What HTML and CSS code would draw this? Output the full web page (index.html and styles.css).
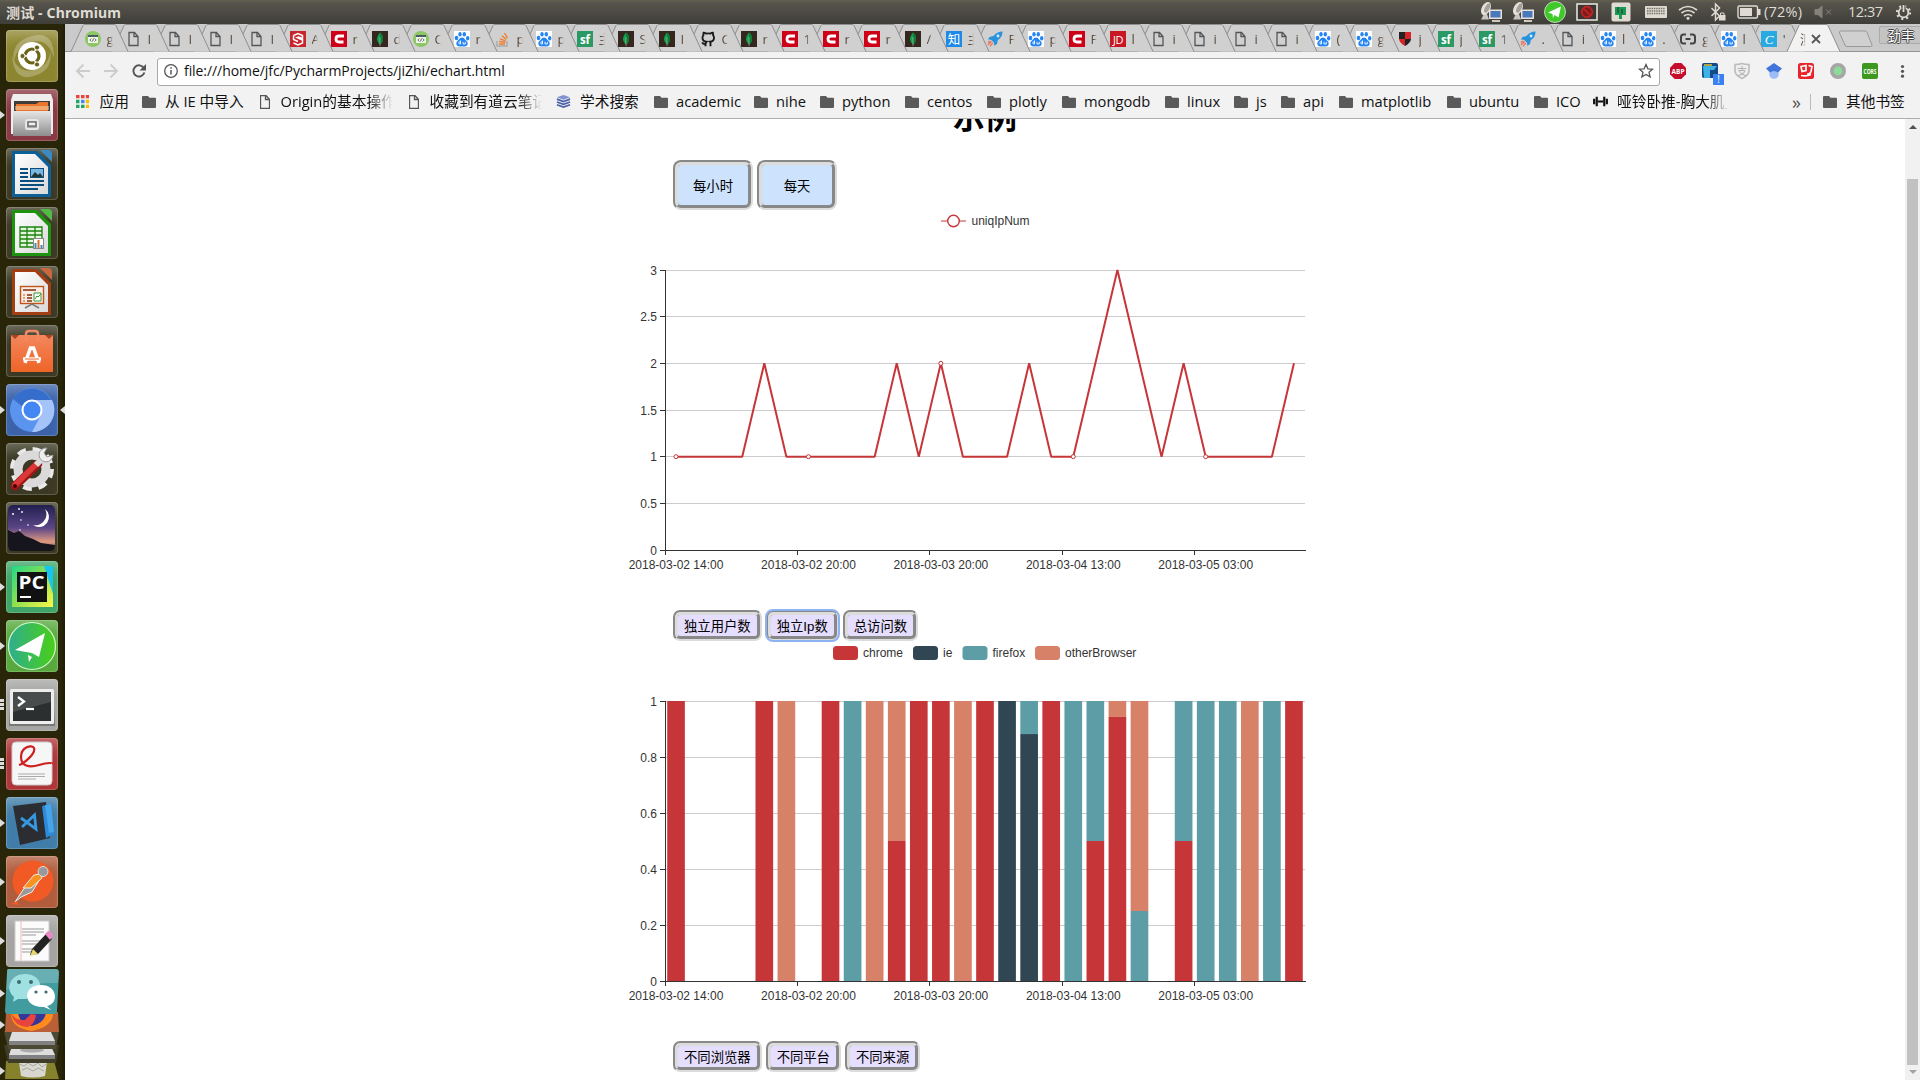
FILE: index.html
```html
<!DOCTYPE html>
<html lang="zh-CN">
<head>
<meta charset="utf-8">
<title>测试</title>
<link rel="stylesheet" href="styles.css">
</head>
<body>
<svg class="defs" width="0" height="0">
  <defs>
    <linearGradient id="paper" x1="0" y1="0" x2="1" y2="1"><stop offset="0" stop-color="#fff"/><stop offset="1" stop-color="#d9d9d9"/></linearGradient>
    <linearGradient id="steel" x1="0" y1="0" x2="0" y2="1"><stop offset="0" stop-color="#e6e6e6"/><stop offset="1" stop-color="#8d8d8d"/></linearGradient>
    <linearGradient id="night" x1="0" y1="0" x2="0" y2="1"><stop offset="0" stop-color="#22204f"/><stop offset=".5" stop-color="#5b4687"/><stop offset=".8" stop-color="#e09a80"/><stop offset="1" stop-color="#6b4a55"/></linearGradient>
    <linearGradient id="bag" x1="0" y1="0" x2="0" y2="1"><stop offset="0" stop-color="#f4875c"/><stop offset="1" stop-color="#ee6427"/></linearGradient>
    <linearGradient id="leafy" x1="0" y1="0" x2="1" y2="0"><stop offset="0" stop-color="#2fae8e"/><stop offset="1" stop-color="#49cf15"/></linearGradient>
    <linearGradient id="pc" x1="0" y1="0" x2="1" y2="1"><stop offset="0" stop-color="#21d789"/><stop offset=".5" stop-color="#8fe04f"/><stop offset="1" stop-color="#fcf84a"/></linearGradient>
  </defs>
  <symbol id="code" viewBox="0 0 16 16"><circle cx="8" cy="8" r="8" fill="#8cc665"/><rect x="3" y="4" width="10" height="8" fill="#eef6e8"/><rect x="3" y="4" width="10" height="2" fill="#4b5b66"/><path d="M6.3 7.5L4.8 9l1.5 1.5M9.7 7.5L11.200 9l-1.500 1.500M8.500 7.500l-1 3" fill="none" stroke="#555" stroke-width=".9"/></symbol>
  <symbol id="doc" viewBox="0 0 16 16"><path d="M3 1.500h5.500l3.500 4v9H3zM8 1.500v4h4" fill="none" stroke="#555" stroke-width="1.300"/></symbol>
  <symbol id="s3" viewBox="0 0 16 16"><rect width="16" height="16" fill="#c9252d"/><path d="M3.500 4.500L8 2.500l4.500 2v3L8.500 6 7 6.500l5.500 2.500v3L8 14l-4.500-2" fill="none" stroke="#fff" stroke-width="1.500"/><path d="M3.500 4.500v4L8 10.500" fill="none" stroke="#fff" stroke-width="1.500"/></symbol>
  <symbol id="csdn" viewBox="0 0 16 16"><rect width="16" height="16" fill="#ce0018"/><path d="M13 5H8Q5 5 5 8t3 3h4.500" fill="none" stroke="#fff" stroke-width="2.800"/></symbol>
  <symbol id="mongo" viewBox="0 0 16 16"><rect width="16" height="16" fill="#35261e"/><path d="M8 1.500Q11.500 4.500 11 8.500T8 13.500Q5.200 11.500 5 8.500T8 1.500z" fill="#12a04c"/><path d="M8 1.500Q11.500 4.500 11 8.500T8 13.500z" fill="#0c7b36"/><path d="M8 6v9" stroke="#c2bfbf" stroke-width=".6"/></symbol>
  <symbol id="baidu" viewBox="0 0 16 16"><rect width="16" height="16" fill="#fff"/><g fill="#2585f5"><ellipse cx="2.500" cy="7" rx="1.800" ry="2.200"/><ellipse cx="6" cy="3.300" rx="1.700" ry="2.300"/><ellipse cx="10.300" cy="3.300" rx="1.700" ry="2.300"/><ellipse cx="13.700" cy="7.300" rx="1.700" ry="2.200"/><path d="M8 6.500q2 0 3.300 2.300l2 2q1 2-.2 3.600-1.500 1.400-5.100.8-3.600.6-5.100-.8-1.200-1.600-.2-3.600l2-2Q6 6.500 8 6.500z"/></g><path d="M6.500 9.500V13H5.300q-1-1.500 0-2.200h1.200M9 10.800V13h2.300v-2.200" stroke="#fff" fill="none" stroke-width=".9"/></symbol>
  <symbol id="stack" viewBox="0 0 16 16"><path d="M2 10v5h10v-5" fill="none" stroke="#aaa" stroke-width="1.400"/><path d="M4 13h6M4.200 10.500l6 .8M5 7.800l5.600 2M6.800 4.800l4.600 3.600M9.500 2l3 5" stroke="#f08030" stroke-width="1.400"/></symbol>
  <symbol id="sf" viewBox="0 0 16 16"><rect width="16" height="16" fill="#2a9964"/><text x="8" y="12.500" text-anchor="middle" class="sfm">sf</text></symbol>
  <symbol id="github" viewBox="0 0 16 16"><path d="M5.500 15.300v-2.500Q3 13.300 2.200 11.300M10.500 15.300v-3q0-1-.5-1.500 4-.4 4-4 0-1.600-1-2.800.3-1.300-.1-2.400-1.200 0-2.400 1-2-.5-4.500 0-1.200-1-2.400-1-.4 1.100-.1 2.400-1 1.200-1 2.800 0 3.600 4 4-.6.600-.5 1.700" fill="none" stroke="#1b1b1b" stroke-width="1.900"/></symbol>
  <symbol id="zhihu" viewBox="0 0 16 16"><rect width="16" height="16" fill="#1d8ae8"/><text x="8" y="12.700" text-anchor="middle" class="zh">知</text></symbol>
  <symbol id="rocket" viewBox="0 0 16 16"><path d="M15.500.5Q10 .5 6.500 5L2.500 6 1 8.500l3 .3 3 3 .3 3L10 13l.8-3.800Q15.700 6 15.500.500z" fill="#2893dc"/><circle cx="11" cy="5" r="1.400" fill="#d7ecfa"/><path d="M4.500 10.500L1 14M5.800 11.800L3 15.500M3.200 10L.8 11.500" stroke="#f06c4e" stroke-width="1.200"/></symbol>
  <symbol id="jd" viewBox="0 0 16 16"><rect width="16" height="16" fill="#c81623"/><text x="8" y="12.500" text-anchor="middle" class="jdm">JD</text></symbol>
  <symbol id="shield" viewBox="0 0 16 16"><path d="M2 1h6v7H2zM8 8h6q-.5 4-6 7z" fill="#222"/><path d="M8 1h6v7H8zM2 8h6v7Q2.500 12 2 8z" fill="#d8232a"/></symbol>
  <symbol id="ali" viewBox="0 0 16 16"><path d="M6 3.500H3.500Q1 3.500 1 6v4q0 2.500 2.500 2.500H6M10 3.500h2.500Q15 3.500 15 6v4q0 2.500-2.500 2.500H10M5.500 8h5" fill="none" stroke="#444" stroke-width="2"/></symbol>
  <symbol id="cy" viewBox="0 0 16 16"><rect width="16" height="16" fill="#27aae1"/><text x="8" y="13" text-anchor="middle" class="cym">C</text></symbol>
  <symbol id="folder" viewBox="0 0 14 12"><path d="M1 0h5l1.500 1.800H13q1 0 1 1V11q0 1-1 1H1q-1 0-1-1V1q0-1 1-1z" fill="#5a5a5a"/></symbol>
  <symbol id="net" viewBox="0 0 22 22"><path d="M4 13l-3 5.500h8L7 13z" fill="#c9c5bc"/><ellipse cx="6" cy="7.500" rx="4.300" ry="7" transform="rotate(28 6 7.500)" fill="#e4e0d8"/><ellipse cx="7.300" cy="7" rx="2.300" ry="5" transform="rotate(28 7.300 7)" fill="#a5a198"/><rect x="9" y="8.500" width="13" height="9.500" fill="#e6e2da"/><rect x="10.500" y="10" width="10" height="6.500" fill="#4a78be"/><path d="M12 20h8" stroke="#dfdbd2" stroke-width="1.800"/></symbol>
</svg>

<header class="panel">
  <span class="title">测试 - Chromium</span>
  <svg class="tray" width="440" height="24" viewBox="1480 0 440 24">
    <use href="#net" x="1480" y="1" width="22" height="22"/><use href="#net" x="1512" y="1" width="22" height="22"/>
    <circle cx="1555" cy="12" r="10.500" fill="#41c92c" stroke="#d9f0cf" stroke-width=".8"/><path d="M1548 12.500l13-6-2.500 11-4-2.500-1.500 3-.500-4z" fill="#fff"/>
    <rect x="1577" y="4" width="20" height="16" fill="#3c3535" stroke="#e4e0d8" stroke-width="1.600"/><circle cx="1587" cy="12" r="5.300" fill="#7c1c1c" stroke="#c22" stroke-width="1.700"/><path d="M1583.500 8.500l7 7" stroke="#c22" stroke-width="1.700"/>
    <rect x="1611.500" y="2.500" width="19" height="19" rx="2" fill="#dfdbd2"/><path d="M1615 7h11v8h-4v4h-3v-4h-4z" fill="#189a52"/><path d="M1618 7v6M1622 9v5" stroke="#333"/>
    <rect x="1645" y="6" width="22" height="12" rx="1" fill="#dedad2"/><path d="M1647 8.500h18M1647 11h18M1647 13.500h18" stroke="#77746c" stroke-width="1.300" stroke-dasharray="1.500 .8"/>
    <path d="M1679 10q9-7 18 0M1681.500 13q6.500-5 13 0M1684 16q4-3 8 0" fill="none" stroke="#dfdbd2" stroke-width="1.700"/><circle cx="1688" cy="18.200" r="1.500" fill="#dfdbd2"/>
    <path d="M1711.500 8l8 8-4 4V4l4 4-8 8" fill="none" stroke="#dfdbd2" stroke-width="1.500"/><rect x="1719" y="15" width="6.500" height="5.500" fill="#dfdbd2"/><path d="M1720.500 15v-2h3.500v2" fill="none" stroke="#dfdbd2"/>
    <rect x="1738" y="6" width="19.500" height="12" rx="1.500" fill="none" stroke="#dfdbd2" stroke-width="1.400"/><rect x="1740" y="8" width="12" height="8" fill="#dfdbd2"/><rect x="1758" y="9" width="2.500" height="6" fill="#dfdbd2"/>
    <text x="1764" y="17" textLength="38" class="ptext">(72%)</text>
    <path d="M1815 9.500h3l4-3.500v12l-4-3.500h-3zM1826 9.500l5 5M1831 9.500l-5 5" fill="#85827a" stroke="#85827a" stroke-width="1"/>
    <text x="1848" y="17" textLength="35" class="ptext">12:37</text>
    <circle cx="1903.500" cy="12.500" r="4.800" fill="none" stroke="#dfdbd2" stroke-width="1.800"/><circle cx="1903.500" cy="12.500" r="6.500" fill="none" stroke="#dfdbd2" stroke-width="2.200" stroke-dasharray="2 3.100"/><path d="M1903.500 4v8" stroke="#4c4a43" stroke-width="4"/><path d="M1903.500 5v7" stroke="#dfdbd2" stroke-width="1.800"/>
  </svg>
</header>

<div class="desk">
<nav class="launcher">
  <div class="tile t-ubuntu"><svg viewBox="0 0 52 52"><path d="M8 32Q4 12 26 6t22 22Q42 8 26 12T8 32zM44 20q4 20-16 26T6 26q6 18 22 14t16-20z" fill="#fff" opacity=".25"/><circle cx="26" cy="26" r="14" fill="#fff"/><circle cx="26" cy="26" r="7" fill="none" stroke="#6b6418" stroke-width="3.200"/><path d="M26 26L16 26M26 26l5-9M26 26l5 9" stroke="#fff" stroke-width="1.500"/><g fill="#6b6418" stroke="#fff" stroke-width="1"><circle cx="16.500" cy="26" r="2.600"/><circle cx="31" cy="17.500" r="2.600"/><circle cx="31" cy="34.500" r="2.600"/></g></svg></div>
  <div class="tile t-files run"><svg viewBox="0 0 52 52"><path d="M7 5h38l2 6v34H5V11z" fill="#eee"/><rect x="8" y="12" width="36" height="16" fill="#403c3a"/><path d="M10 15h20l3-2h9v12H10z" fill="#e8762c"/><path d="M9 18h34M9 20h34" stroke="#fbd9b0"/><path d="M7 22h38v25H7z" fill="url(#steel)"/><rect x="20" y="31" width="12" height="9" rx="1.500" fill="none" stroke="#e5e5e5" stroke-width="2"/><rect x="22" y="33" width="8" height="4" fill="#eee" stroke="#444"/></svg></div>
  <div class="tile t-dark"><svg viewBox="0 0 52 52"><path d="M6 3h25l14 14v32H6z" fill="#0c5f97"/><path d="M34 2h8q4 0 4 4v8z" fill="#3b8ac2"/><path d="M9 6h20l13 13v27H9z" fill="url(#paper)"/><path d="M14 21h8M14 25h8M14 29h8M14 33h24M14 37h24M14 41h18" stroke="#0a4e7e" stroke-width="2"/><rect x="24.500" y="20.500" width="13" height="9" fill="#79b7df" stroke="#0a4e7e"/><path d="M25 29l4-5 3 3 2-2 3 4z" fill="#233"/></svg></div>
  <div class="tile t-dark"><svg viewBox="0 0 52 52"><path d="M6 3h25l14 14v32H6z" fill="#1d9310"/><path d="M34 2h8q4 0 4 4v8z" fill="#52bb44"/><path d="M9 6h20l13 13v27H9z" fill="url(#paper)"/><path d="M14 20h22v20H14zM14 24h22M14 28h22M14 32h22M14 36h22M21 20v20M29 20v20" fill="#e3f7dc" stroke="#1e8212" stroke-width="1.300"/><rect x="27.500" y="31.500" width="10" height="10" fill="#fff" stroke="#888"/><path d="M29.500 36v5M35.500 38v3" stroke="#3a8ac8" stroke-width="2"/><path d="M32.500 33v8" stroke="#e06a1c" stroke-width="2"/></svg></div>
  <div class="tile t-dark"><svg viewBox="0 0 52 52"><path d="M6 3h25l14 14v32H6z" fill="#a13e13"/><path d="M34 2h8q4 0 4 4v8z" fill="#c9683d"/><path d="M9 6h20l13 13v27H9z" fill="url(#paper)"/><rect x="14.500" y="20.500" width="23" height="17" fill="#f7ede6" stroke="#c2541b" stroke-width="1.400"/><path d="M17 24h13M21 29h5M21 32h5M21 35h5" stroke="#83310c" stroke-width="1.700"/><path d="M17 29h2M17 32h2M17 35h2" stroke="#e28a50" stroke-width="1.700"/><path d="M28 27h7v8h-7zM29 33l2-3 1 1 3-3" fill="#fff" stroke="#3b9a35"/><path d="M19 42l7-4 7 4" fill="none" stroke="#777" stroke-width="1.500"/></svg></div>
  <div class="tile t-dark"><svg viewBox="0 0 52 52"><path d="M5 10h42v37H5z" fill="url(#bag)"/><path d="M5 10l4 4 4-4M39 10l4 4 4-4" fill="#a84322"/><path d="M20 16V9q0-3 3-3h6q3 0 3 3v7" fill="none" stroke="#f08a66" stroke-width="2.500"/><path d="M19 38l5.500-15h3L33 38" stroke="#fff" stroke-width="3.500" fill="none"/><path d="M17 34h18" stroke="#fff" stroke-width="3.500"/><path d="M19 34h14" stroke="#ee6427" stroke-width="1"/></svg></div>
  <div class="tile t-chromium run focus"><svg viewBox="0 0 52 52"><circle cx="26" cy="26" r="22" fill="#5b94ef"/><path d="M26 16h20a22 22 0 0 1-20 32l9-17z" fill="#a4c3f8"/><path d="M7 15a22 22 0 0 1 38 1H26q-7 1-9 7z" fill="#366fcb"/><circle cx="26" cy="26" r="9.500" fill="#4387f4" stroke="#fff" stroke-width="2"/></svg></div>
  <div class="tile t-dark"><svg viewBox="0 0 52 52"><circle cx="26" cy="26" r="18" fill="none" stroke="#e9e9e9" stroke-width="8" stroke-dasharray="8 6.140"/><circle cx="26" cy="26" r="14" fill="none" stroke="#dadada" stroke-width="9"/><path d="M9 43L32 21" stroke="#9d1616" stroke-width="8.500" stroke-linecap="round"/><path d="M9 42L31 20.500" stroke="#dc3838" stroke-width="5.500" stroke-linecap="round"/><path d="M30 22l6-6" stroke="#ddd" stroke-width="6"/><path d="M41 5a7 7 0 1 0 6 7l-6 2-3-4z" fill="#eee" stroke="#999"/><circle cx="9" cy="43" r="2" fill="#400"/></svg></div>
  <div class="tile t-dark"><svg viewBox="0 0 52 52"><rect x="2" y="3" width="47" height="46" rx="5" fill="url(#night)"/><path d="M2 28l6 3 5-2 6 5 8 3 8 4 14 2v1q0 5-5 5H7q-5 0-5-5z" fill="#16141c"/><path d="M39 7a10 10 0 1 1-12 16 11 11 0 0 0 12-16z" fill="#fff"/><g fill="#fff"><circle cx="7" cy="12" r="1"/><circle cx="13" cy="7" r=".9"/><circle cx="16" cy="10" r=".9"/><circle cx="15" cy="18" r=".8"/><circle cx="22" cy="23" r=".8"/><circle cx="14" cy="28" r=".8"/></g></svg></div>
  <div class="tile t-pycharm run"><svg viewBox="0 0 52 52"><path d="M6 5h41v41H6z" fill="url(#pc)"/><path d="M38 5h9v28z" fill="#19c5ef"/><rect x="11" y="11" width="30" height="30" fill="#111"/><text x="12.500" y="28" class="pcm" textLength="26" lengthAdjust="spacingAndGlyphs">PC</text><path d="M14 36h11" stroke="#fff" stroke-width="2"/></svg></div>
  <div class="tile t-tele run"><svg viewBox="0 0 52 52"><circle cx="26" cy="26" r="23.500" fill="url(#leafy)" stroke="#d6f5d0" stroke-width="1.200"/><path d="M9 30l30-17-6 24-7-4-6-1z" fill="#fff"/><path d="M22 35l4 2-3 5z" fill="#fff"/></svg></div>
  <div class="tile t-term run3"><svg viewBox="0 0 52 52"><path d="M5 11h42l2 36H3z" fill="#777"/><rect x="4" y="10" width="44" height="35" rx="1.500" fill="#eee"/><rect x="7" y="13" width="38" height="29" fill="#2b2f2f"/><path d="M7 13h38v10L7 33z" fill="#484c4c"/><path d="M12 18l6 4.500-6 4.500" fill="none" stroke="#fff" stroke-width="2.300"/><path d="M20 30h8" stroke="#fff" stroke-width="2.200"/></svg></div>
  <div class="tile t-red run3"><svg viewBox="0 0 52 52"><rect x="6" y="4" width="40" height="43" rx="4" fill="#f6f6f6" stroke="#ccc"/><path d="M13 27C17 26 30 16 28 10c-2-4-13-1-13 9 0 9 8 11 18 8s14-2 13-1" fill="none" stroke="#cf2020" stroke-width="2.200"/><path d="M12 36h27M12 38.500h27M12 41h18" stroke="#aaa" stroke-width="1"/></svg></div>
  <div class="tile t-code run"><svg viewBox="0 0 52 52"><path d="M7 9l33-4 4 36-30 7z" fill="#2b2d33"/><path d="M36 9l9-2 3 30-8 4z" fill="#2c8ad8"/><path d="M39 8l6-1 3 28-5 1z" fill="#46a4ea"/><path d="M15 21l15 11-1.500-14L16 30" fill="none" stroke="#3598e0" stroke-width="2.800"/></svg></div>
  <div class="tile t-post run"><svg viewBox="0 0 52 52"><circle cx="27" cy="25" r="20.500" fill="#f15a24"/><path d="M9 46l8-12 13-14 4 3-8 13-11 5z" fill="#999" stroke="#eee"/><path d="M17 32l11-13 6-1 2 4-11 10z" fill="#f7931e" stroke="#eee"/><circle cx="37" cy="15.500" r="5" fill="#999" stroke="#ddd"/><path d="M5 48l6-3 2 4z" fill="#f15a24"/></svg></div>
  <div class="tile t-gedit run"><svg viewBox="0 0 52 52"><rect x="9" y="6" width="34" height="40" fill="#fbfbfb" stroke="#ccc"/><path d="M15 6v40" stroke="#f3b7b7"/><path d="M16 14h22M16 17h22M16 20h14M16 26h22M16 29h20M16 34h14M16 37h10" stroke="#999"/><path d="M26 34L40 19l6 5-14 15-8 1z" fill="#222"/><path d="M27 34l5 5-8 2z" fill="#e5d86c"/><path d="M39 19l3-3q5 1 5 5l-3 4z" fill="#e78ac6"/></svg></div>
  <svg class="pile" width="65" height="113" viewBox="0 967 65 113">
    <path d="M6 1061l47-4 6 22H5z" fill="#86822b"/><path d="M19 1062q14-4 28 0l-2 14q-12 3-24 0z" fill="#d8d8d0"/><path d="M19 1064l5 2 4-3 5 3 5-3 4 4 4-3M22 1070l5-2 6 3 5-3 6 3" stroke="#aaa89e" fill="none"/>
    <path d="M4 1045h55l-3 18H8z" fill="#3f3d29"/><path d="M12 1046h39l4 9H9z" fill="#ddd"/><path d="M9 1055h46v4H9z" fill="#808080"/><ellipse cx="32" cy="1050" rx="12" ry="2.500" fill="#aaa"/>
    <path d="M4 1031h55l-3 18H8z" fill="#4b4934"/><path d="M12 1032h39l4 9H9z" fill="#ddd"/><path d="M9 1041h46v4H9z" fill="#808080"/>
    <path d="M6 1012h52l1 20H5z" fill="#ba6039"/><path d="M11 1012h42q1 14-21 19Q10 1028 11 1012z" fill="#ff8b1d"/><path d="M18 1012h28q-1 11-14 14-13-2-14-14z" fill="#35379a"/><path d="M11 1012q3 9 14 8l6-6 5 1q-1 10-9 12-14-1-16-15z" fill="#e7443e"/>
    <path d="M8 969h48q3 0 3 4l-2 38q0 3-3 3H8q-3 0-3-3l2-38q0-4 1-4z" fill="#419b9f"/><path d="M8 969h48q3 0 3 4l-1 10Q30 982 6 990l1-17q0-4 1-4z" fill="#fff" opacity=".2"/>
    <path d="M25 974c20 0 21 24 0 25l-7 0-5 3 1-5C4 988 11 974 25 974z" fill="#9fe0e3"/><path d="M41 985c17 0 18 19 6 21l4 4-7-3c-22 1-22-22-3-22z" fill="#fff"/><g fill="#3d6b70"><circle cx="19" cy="982" r="2"/><circle cx="31" cy="982" r="2"/><circle cx="36" cy="992" r="1.600"/><circle cx="46" cy="992" r="1.600"/></g>
    <path d="M0 989.500l5 4-5 4zM0 1021l5 4-5 4zM0 1067l5 4-5 4z" fill="#ddd"/>
  </svg>
</nav>

<main class="browser">
  <div class="tabs" id="tabs"></div>
  <div class="toolbar">
    <svg width="88" height="34" viewBox="65 54 88 34"><g fill="none" stroke-width="1.900"><path d="M90 71H77.500M83.500 64.500L77 71l6.500 6.500M104 71h12.500M110.500 64.500L117 71l-6.500 6.500" stroke="#ccc"/><path d="M143.800 68a5.600 5.600 0 1 0 .6 4.500" stroke="#555"/></g><path d="M146 64v6.500h-6.500z" fill="#555"/></svg>
    <div class="omnibox">
      <svg width="16" height="16" viewBox="0 0 16 16"><circle cx="8" cy="8" r="6.300" fill="none" stroke="#555" stroke-width="1.300"/><path d="M8 7v4.500M8 4.300v1.500" stroke="#555" stroke-width="1.500"/></svg>
      <span class="url">file:///home/jfc/PycharmProjects/jiZhi/echart.html</span>
      <svg width="16" height="16" viewBox="0 0 16 16"><path d="M8 1.500l1.900 4.300 4.700.4-3.600 3.100 1.100 4.600L8 11.500l-4.100 2.400L5 9.300 1.400 6.200l4.700-.4z" fill="none" stroke="#555" stroke-width="1.300"/></svg>
    </div>
    <svg width="250" height="34" viewBox="1664 54 250 34">
      <path d="M1674.700 63h6.600l4.700 4.700v6.600l-4.700 4.700h-6.600l-4.700-4.700v-6.600z" fill="#c70d2c"/><text x="1678" y="74" text-anchor="middle" class="ext" textLength="13" lengthAdjust="spacingAndGlyphs">ABP</text>
      <rect x="1702" y="63" width="16" height="15" rx="2" fill="#164a82"/><path d="M1703 66h14l-3 4h-4v8h-6z" fill="#3eb1e6"/><path d="M1704 65h8" stroke="#e8c030" stroke-width="1.500"/><rect x="1713" y="74" width="11" height="11" fill="#3b82f0"/><text x="1718.500" y="83" text-anchor="middle" class="bang">!</text>
      <path d="M1735 64.500q4 0 7-1 3 1 7 1v6q0 5-7 8-7-3-7-8z" fill="#eee" stroke="#bbb" stroke-width="1.600"/><text x="1742" y="74.500" text-anchor="middle" class="zhi">支</text>
      <circle cx="1774" cy="74" r="4.800" fill="#9bbcf9"/><path d="M1774 63l8 5.500-4 4q-4-3-8 0l-4-4z" fill="#4076db"/>
      <rect x="1798" y="63" width="16" height="16" rx="2.500" fill="#e9232a"/><path d="M1801 66.500l5-1v5l-4 1zM1801 75.500q6 1 10-1M1808.500 65.500l3.500 1-1 5q-1 3-4 2.500" fill="none" stroke="#fff" stroke-width="1.700"/>
      <circle cx="1838" cy="71" r="6.200" fill="#8bdc98" stroke="#a6a6a6" stroke-width="3.600"/>
      <rect x="1862" y="63" width="16" height="16" rx="2" fill="#3c981f"/><text x="1870" y="74" text-anchor="middle" class="ext" textLength="13" lengthAdjust="spacingAndGlyphs">CORS</text>
      <g fill="#555"><circle cx="1902.500" cy="66.500" r="1.600"/><circle cx="1902.500" cy="71.300" r="1.600"/><circle cx="1902.500" cy="76.200" r="1.600"/></g>
    </svg>
  </div>
  <div class="bookmarks">
    <a><svg class="b13" viewBox="0 0 13 13"><path d="M0 1.500h3.500M5 1.500h3.500M9.800 1.500H13" stroke="#e8453c" stroke-width="3.400"/><path d="M5 6.500h3.500" stroke="#4688f1" stroke-width="3.400"/><path d="M9.800 6.500H13M9.800 11.500H13" stroke="#fbbc05" stroke-width="3.400"/><path d="M0 6.500h3.500M0 11.500h3.500M5 11.500h3.500" stroke="#23a566" stroke-width="3.400"/></svg><span>应用</span></a>
    <a><svg class="fold"><use href="#folder"/></svg><span>从 IE 中导入</span></a>
    <a><svg class="page" viewBox="2.500 1 10 14"><use href="#doc" width="16" height="16"/></svg><span class="fade">Origin的基本操作</span></a>
    <a><svg class="page" viewBox="2.500 1 10 14"><use href="#doc" width="16" height="16"/></svg><span class="fade">收藏到有道云笔记</span></a>
    <a><svg class="b15" viewBox="0 0 16 16"><path d="M1 3.500L8 1l7 2.500L8 6z" fill="#7f93d0"/><path d="M1 5.500L8 8l7-2.500M1 8.500L8 11l7-2.500M1 11.500L8 14l7-2.500" fill="none" stroke="#4a60a8" stroke-width="1.800"/></svg><span>学术搜索</span></a>
    <a class="lat"><svg class="fold"><use href="#folder"/></svg><span>academic</span></a>
    <a class="lat"><svg class="fold"><use href="#folder"/></svg><span>nihe</span></a>
    <a class="lat"><svg class="fold"><use href="#folder"/></svg><span>python</span></a>
    <a class="lat"><svg class="fold"><use href="#folder"/></svg><span>centos</span></a>
    <a class="lat"><svg class="fold"><use href="#folder"/></svg><span>plotly</span></a>
    <a class="lat"><svg class="fold"><use href="#folder"/></svg><span>mongodb</span></a>
    <a class="lat"><svg class="fold"><use href="#folder"/></svg><span>linux</span></a>
    <a class="lat"><svg class="fold"><use href="#folder"/></svg><span>js</span></a>
    <a class="lat"><svg class="fold"><use href="#folder"/></svg><span>api</span></a>
    <a class="lat"><svg class="fold"><use href="#folder"/></svg><span>matplotlib</span></a>
    <a class="lat"><svg class="fold"><use href="#folder"/></svg><span>ubuntu</span></a>
    <a class="lat"><svg class="fold"><use href="#folder"/></svg><span>ICO</span></a>
    <a><svg class="b15" viewBox="0 0 16 16"><path d="M1.200 5v6M4 3v10M12 3v10M14.800 5v6" stroke="#111" stroke-width="2.300"/><path d="M5 8h6" stroke="#111" stroke-width="2.200"/></svg><span class="fade">哑铃卧推-胸大肌_</span></a>
    <span class="more">»</span>
    <a class="others"><svg class="fold"><use href="#folder"/></svg><span>其他书签</span></a>
  </div>
  <div class="viewport">
    <section class="page-body">
      <h1>示例</h1>
      <div class="btns top"><button class="big">每小时</button><button class="big">每天</button></div>
      <svg class="chart" id="line" width="800" height="400"></svg>
      <div class="btns"><button>独立用户数</button><button class="on">独立Ip数</button><button>总访问数</button></div>
      <svg class="chart" id="bars" width="800" height="400"></svg>
      <div class="btns"><button>不同浏览器</button><button>不同平台</button><button>不同来源</button></div>
    </section>
    <div class="scrollbar"><i class="up"></i><b></b><i class="down"></i></div>
  </div>
</main>
</div>
<script src="script.js"></script>
</body>
</html>
```
FILE: styles.css
```css
* { box-sizing: border-box; }
body { margin: 0; width: 1920px; height: 1080px; overflow: hidden; display: flex; flex-direction: column; background: #fff; font-family: "Open Sans", "Noto Sans CJK SC", sans-serif; }
.defs { position: absolute; }
.panel { flex: 0 0 24px; display: flex; justify-content: space-between; align-items: center; background: linear-gradient(#625f50, #55534b 15%, #3f3e39); }
.title { padding: 1px 0 0 6px; color: #dfdbd2; font: bold 14px/23px "Noto Sans", "Noto Sans CJK SC", sans-serif; letter-spacing: .15px; }
.ptext { fill: #dfdbd2; font: 14.5px "Open Sans", sans-serif; }
.desk { flex: 1; display: flex; min-height: 0; }

.launcher { flex: 0 0 65px; display: flex; flex-direction: column; background: linear-gradient(90deg, #282508 0, #282508 61px, #1f1c06); overflow: hidden; padding-top: 6px; }
.tile { position: relative; flex: 0 0 52px; width: 52px; margin: 0 0 7px 6px; border-radius: 4px; box-shadow: inset 0 0 0 1px rgba(255,255,255,.18), inset 0 14px 14px -8px rgba(255,255,255,.3); }
.tile:nth-child(16) { margin-bottom: 0; }
.tile svg { display: block; width: 52px; height: 52px; }
.t-ubuntu { background-color: #8d8630; }
.t-files { background-color: #893943; }
.t-dark { background-color: #3b3924; }
.t-chromium { background-color: #3c63a9; }
.t-pycharm { background-color: #3fa568; }
.t-tele { background-color: #57a93d; }
.t-term { background-color: #a5a5a3; }
.t-red { background-color: #ae3538; }
.t-code { background-color: #417da9; }
.t-post { background-color: #b15d3d; }
.t-gedit { background-color: #a6a4a2; }
.run::before { content: ""; position: absolute; left: -6px; top: 21.500px; border: 4px solid transparent; border-left: 5px solid #ddd; border-right: 0; }
.focus::after { content: ""; position: absolute; right: -7px; top: 21.500px; border: 4px solid transparent; border-right: 5px solid #ddd; border-left: 0; }
.run3::before { content: ""; position: absolute; left: -6px; top: 20px; width: 4px; height: 11px; background: repeating-linear-gradient(#ddd 0 3px, transparent 3px 4px); }
.pile { display: block; flex: none; }
.pcm { font: bold 18px "Open Sans", sans-serif; fill: #fff; }

.browser { flex: 1; display: flex; flex-direction: column; min-width: 0; }
.tabs { flex: 0 0 28px; display: flex; padding-left: 5.600px; background: #cacaca; box-shadow: inset 0 -1px #949494; overflow: hidden; }
.tab { position: relative; isolation: isolate; flex: none; width: 41px; height: 28px; display: flex; align-items: center; padding: 2px 0 0 14px; }
.tab.narrow { width: 40.200px; }
.tab .shape { position: absolute; left: 0; top: 0; z-index: -1; overflow: visible; }
.tab .ico { width: 16px; height: 16px; flex: none; }
.tab em { flex: 0 0 6px; width: 6px; margin-left: 6px; overflow: hidden; font: 13px/18px "Open Sans", "Noto Sans CJK SC", sans-serif; color: #5c4a3a; -webkit-mask-image: linear-gradient(90deg, #000 40%, transparent); }
.tab.active { width: 51px; padding-left: 13px; }
.tab.active em { margin-left: 0; }
.tab.active .close { width: 12px; height: 12px; margin-left: 4px; }
.newtab { flex: none; margin-top: 6px; }
.user { flex: none; width: 44px; height: 18px; margin: 2px 0 0 5px; border: 1px solid #aaa; border-radius: 2px; background: #c4c4c4; text-align: center; color: #fff; font: 13.500px/16px "Noto Sans CJK SC", sans-serif; text-shadow: 1px 0 #444, -1px 0 #444, 0 1px #444, 0 -1px #444; }
.sfm { font: bold 11.500px "Open Sans", sans-serif; fill: #fff; }
.jdm { font: 11px "Open Sans", sans-serif; fill: #fff; letter-spacing: -.5px; }
.cym { font: italic 13px "Liberation Serif", serif; fill: #fff; }
.zh { font: 12.500px "Noto Sans CJK SC", sans-serif; fill: #fff; }

.toolbar { flex: 0 0 36px; display: flex; align-items: center; background: #f2f2f2; padding-top: 2px; }
.omnibox { flex: 0 0 1503px; margin: 1px 4px 0; height: 28px; border: 1px solid #aaa; border-radius: 3px; background: #fff; display: flex; align-items: center; padding: 0 5px 1px; gap: 5px; }
.url { flex: 1; font-size: 14px; line-height: 26px; letter-spacing: -.07px; color: #111; }
.ext { font: bold 6.500px "Open Sans", sans-serif; fill: #fff; }
.bang { font: 10px "Open Sans", sans-serif; fill: #fff; }
.zhi { font: 10px "Noto Sans CJK SC", sans-serif; fill: #aaa; }
.bookmarks { flex: 0 0 31px; display: grid; grid-template-columns: 66px 118px 149px 147px 97px 100px 66px 85px 82px 75px 103px 69px 47px 58px 108px 87px 60px 199px 18px 1fr; padding: 0 0 3px 11px; align-items: center; background: #f2f2f2; border-bottom: 1px solid #aeaeae; color: #111; font-size: 14.700px; line-height: 27px; }
.bookmarks a { display: flex; align-items: center; gap: 9px; white-space: nowrap; }
.bookmarks .lat { padding-left: 1px; gap: 8px; }
.bookmarks a > span { flex: none; }
.bookmarks svg { flex: none; }
.fold { width: 14px; height: 12px; }
.page { width: 10px; height: 14px; margin-right: 1.500px; }
.b13 { width: 13px; height: 13px; margin-right: 1.500px; }
.b15 { width: 15px; height: 15px; }
.bookmarks .fade { width: 113px; overflow: hidden; -webkit-mask-image: linear-gradient(90deg, #000 78%, transparent 99%); }
.more { color: #555; font-size: 18px; line-height: 20px; }
.others { border-left: 1px solid #bbb; padding-left: 12px; height: 16px; }

.viewport { flex: 1; display: flex; min-height: 0; }
.page-body { flex: 1; display: flex; flex-direction: column; align-items: center; overflow: hidden; background: #fff; }
h1 { margin: -25px 0 0; flex: 0 0 66px; font: bold 32px/42px "Noto Sans CJK SC", sans-serif; color: #000; }
.btns { width: 800px; flex: 0 0 31px; padding-left: 88px; display: flex; gap: 4px; }
.btns.top { flex-basis: 50px; }
.btns button { margin: 0; padding: 3px 6px 1px; height: 31px; border: 5px groove #dcdcdc; border-radius: 7px; background: #e6defe; font: 13.333px/17px "Liberation Sans", "Noto Sans CJK SC", sans-serif; color: #000; white-space: nowrap; }
.btns .big { width: 80px; height: 50px; padding-top: 3px; border-radius: 8px; background: #cde2fc; }
.btns .on { outline: 2px solid #8db4f2; outline-offset: -1px; }
.chart { flex: none; display: block; font: 12px "Liberation Sans", sans-serif; fill: #333; }
.chart .grid { stroke: #ccc; }
.chart .axis { stroke: #333; fill: none; }
.chart .plot { fill: none; stroke: #c63639; stroke-width: 2; stroke-linejoin: bevel; }
.chart .dot { fill: #fff; stroke: #c63639; }
.chart .c0 { fill: #c63639; }
.chart .c1 { fill: #314653; }
.chart .c2 { fill: #5c9da6; }
.chart .c3 { fill: #d78168; }

.scrollbar { flex: 0 0 15px; background: #f1f1f1; display: flex; flex-direction: column; align-items: center; }
.scrollbar b { width: 11px; height: 886px; background: #c1c1c1; }
.scrollbar i { width: 0; height: 0; border: 4px solid transparent; }
.scrollbar .up { border-top: 0; border-bottom-color: #505050; margin: 6px 0 50px; }
.scrollbar .down { border-bottom: 0; border-top-color: #a3a3a3; margin-top: 5px; }
```
FILE: script.js
```js
// Tab strip: favicon id and the first visible character of each title.
const tabs = [
  ["code", "g"], ["doc", "I"], ["doc", "I"], ["doc", "I"], ["doc", "I"], ["s3", "A"], ["csdn", "r"], ["mongo", "d"], ["code", "C"],
  ["baidu", "r"], ["stack", "p"], ["baidu", "p"], ["sf", "主"], ["mongo", "S"], ["mongo", "I"], ["github", "C"], ["mongo", "r"],
  ["csdn", "1"], ["csdn", "r"], ["csdn", "r"], ["mongo", "/"], ["zhihu", "主"], ["rocket", "F"], ["baidu", "p"], ["csdn", "F"],
  ["jd", "l"], ["doc", "i"], ["doc", "i"], ["doc", "i"], ["doc", "i"], ["baidu", "("], ["baidu", "g"], ["shield", "j"],
  ["sf", "j"], ["sf", "1"], ["rocket", "."], ["doc", "i"], ["baidu", "l"], ["baidu", "."], ["ali", "g"], ["baidu", "l"], ["cy", "'"]
];
const outline = (w, fill) =>
  `<svg class="shape" width="${w}" height="28"><path d="M0 27.500L12 1.500Q12.500 .500 14 .500H${w - 14}Q${w - 12.500} .500 ${w - 12} 1.500L${w} 27.500" fill="${fill}" stroke="#8e8e8e"/></svg>`;
document.getElementById("tabs").innerHTML =
  tabs.map(([icon, ch], i) =>
    `<div class="tab${i > 34 ? " narrow" : ""}" style="z-index:${50 - i}">${outline(57, "#d0d0d0")}<svg class="ico"><use href="#${icon}"/></svg><em>${ch}</em></div>`).join("") +
  `<div class="tab active" style="z-index:60">${outline(53, "#f2f2f2")}<em>测</em><svg class="close" viewBox="0 0 12 12"><path d="M2 2l8 8M10 2l-8 8" stroke="#555" stroke-width="1.800"/></svg></div>` +
  `<svg class="newtab" width="36" height="19"><path d="M1.500 3Q1 1 3 1H27Q28.500 1 29 2.500L34 15q.5 1.500-1.500 1.500H9Q7.500 16.500 7 15z" fill="#d0d0d0" stroke="#999"/></svg><div class="user">劲丰</div>`;

const STEP = 640 / 29, LEFT = 80, TOP = 60, BOTTOM = 340;
const times = ["2018-03-02 14:00", "2018-03-02 20:00", "2018-03-03 20:00", "2018-03-04 13:00", "2018-03-05 03:00"];

function gridLines(max, step) {
  let s = "";
  const n = Math.round(max / step);
  for (let k = 0; k <= n; k++) {
    const y = Math.floor(BOTTOM - 280 * k / n) + .5;
    if (k) s += `<path class="grid" d="M${LEFT} ${y}H720"/>`;
    s += `<path class="axis" d="M75 ${y}H80"/><text x="72" y="${y + 4}" text-anchor="end">${+(k * step).toFixed(1)}</text>`;
  }
  return s;
}
function axes() {
  let s = `<path class="axis" d="M80.500 ${TOP}V${BOTTOM + 1}M80 ${BOTTOM + .5}H721"/>`;
  times.forEach((t, k) => {
    const x = Math.floor(LEFT + k * 6 * STEP) + .5;
    s += `<path class="axis" d="M${x} ${BOTTOM}v5"/><text x="${LEFT + (k * 6 + .5) * STEP}" y="${BOTTOM + 18.5}" text-anchor="middle">${t}</text>`;
  });
  return s;
}

const hits = [1,1,1,1,2,1,1,1,1,1,2,1,2,1,1,1,2,1,1,2,3,2,1,2,1,1,1,1,2];
const px = i => LEFT + (i + .5) * STEP;
const py = v => BOTTOM - v * 280 / 3;
document.getElementById("line").innerHTML =
  `<path d="M356 11H381" stroke="#c63639" stroke-width="1" fill="none"/><circle class="dot" cx="368.500" cy="11" r="5.800" stroke-width="1.400"/><text x="386.500" y="15.200">uniqIpNum</text>` +
  gridLines(3, .5) + axes() +
  `<polyline class="plot" points="${hits.map((v, i) => px(i) + "," + py(v)).join(" ")}"/>` +
  [0, 6, 12, 18, 24].map(i => `<circle class="dot" cx="${px(i)}" cy="${py(hits[i])}" r="2"/>`).join("");

// Each bar: [category index, [series, share] from the bottom up].
const stacks = [
  [0,[0,1]],[4,[0,1]],[5,[3,1]],[7,[0,1]],[8,[2,1]],[9,[3,1]],[10,[0,.5],[3,.5]],[11,[0,1]],[12,[0,1]],[13,[3,1]],[14,[0,1]],
  [15,[1,1]],[16,[1,.882],[2,.118]],[17,[0,1]],[18,[2,1]],[19,[0,.5],[2,.5]],[20,[0,.943],[3,.057]],[21,[2,.25],[3,.75]],
  [23,[0,.5],[2,.5]],[24,[2,1]],[25,[2,1]],[26,[3,1]],[27,[2,1]],[28,[0,1]]
];
let bars = "";
for (const [i, ...parts] of stacks) {
  let base = BOTTOM;
  for (const [s, share] of parts) {
    const h = share * 280;
    bars += `<rect class="c${s}" x="${LEFT + (i + .1) * STEP}" y="${base - h}" width="${STEP * .8}" height="${h}"/>`;
    base -= h;
  }
}
const legend = [[248, "chrome"], [328, "ie"], [377.5, "firefox"], [450, "otherBrowser"]];
document.getElementById("bars").innerHTML =
  legend.map(([x, t], s) => `<rect class="c${s}" x="${x}" y="5" width="25" height="14" rx="3.500"/><text x="${x + 30}" y="16">${t}</text>`).join("") +
  gridLines(1, .2) + bars + axes();
```
